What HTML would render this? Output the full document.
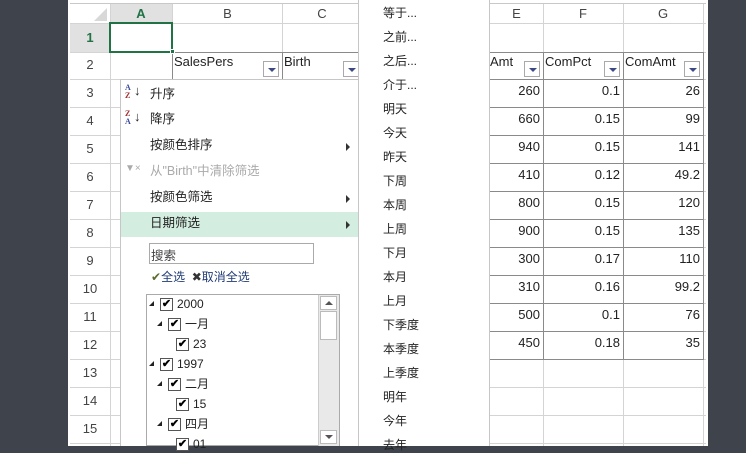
<!DOCTYPE html>
<html><head><meta charset="utf-8"><style>
*{margin:0;padding:0;box-sizing:border-box}
body{width:746px;height:446px;overflow:hidden;background:#3f434b;font-family:"Segoe UI","Liberation Sans","Noto Sans CJK SC",sans-serif;font-size:13px;color:#222;position:relative}
.a{position:absolute}
.sheet{left:68px;top:0;width:640px;height:446px;background:#fff}
.vl{position:absolute;width:1px;background:#d4d4d4}
.hl{position:absolute;height:1px;background:#d4d4d4}
.dv{position:absolute;width:1px;background:#8a8a8a}
.dh{position:absolute;height:1px;background:#8a8a8a}
.rh{position:absolute;left:70px;width:40px;text-align:center;color:#444;font-size:13px}
.ch{position:absolute;top:4px;height:19px;text-align:center;color:#444;font-size:13px;line-height:19px}
.num{position:absolute;text-align:right;font-size:13px;color:#222}
.dd{position:absolute;width:16px;height:16px;border:1px solid #aaa;background:#fff}
.dd:after{content:"";position:absolute;left:4px;top:6px;border-left:4px solid transparent;border-right:4px solid transparent;border-top:4px solid #3b4a84}
.mi{position:absolute;left:150px;font-size:12.5px;color:#222;line-height:16px}
.arr{position:absolute;left:346px;width:0;height:0;border-top:4px solid transparent;border-bottom:4px solid transparent;border-left:4px solid #333}
.si{position:absolute;left:383px;font-size:12px;color:#222;line-height:16px}
.cb{position:absolute;width:13px;height:13px;border:1px solid #555;background:#fff;font-size:11px;line-height:11px;text-align:center;font-weight:bold;color:#000}
.tri{position:absolute;width:0;height:0;border-left:5px solid transparent;border-bottom:5px solid #222}
.tt{position:absolute;font-size:12px;color:#222;line-height:15px}
</style></head><body>
<div class="a sheet"></div>
<div class="a" style="left:70px;top:3px;width:636px;height:1px;background:#c8c8c8"></div>
<div class="a" style="left:110px;top:4px;width:62px;height:19px;background:#e1e1e1"></div>
<div class="a" style="left:70px;top:23px;width:40px;height:29px;background:#e1e1e1"></div>
<div class="a" style="left:94px;top:8px;border-left:13px solid transparent;border-bottom:13px solid #d8d8d8"></div>
<div class="ch" style="left:110px;width:62px;color:#217346;font-weight:bold">A</div>
<div class="ch" style="left:173px;width:109px">B</div>
<div class="ch" style="left:282px;width:80px">C</div>
<div class="ch" style="left:490px;width:53px">E</div>
<div class="ch" style="left:543px;width:80px">F</div>
<div class="ch" style="left:623px;width:80px">G</div>
<div class="vl" style="left:110px;top:4px;height:442px"></div>
<div class="vl" style="left:172px;top:4px;height:442px"></div>
<div class="vl" style="left:282px;top:4px;height:442px"></div>
<div class="vl" style="left:543px;top:4px;height:442px"></div>
<div class="vl" style="left:623px;top:4px;height:442px"></div>
<div class="vl" style="left:703px;top:4px;height:442px"></div>
<div class="hl" style="left:70px;top:23px;width:636px"></div>
<div class="hl" style="left:70px;top:52px;width:636px"></div>
<div class="hl" style="left:70px;top:79px;width:636px"></div>
<div class="hl" style="left:70px;top:107px;width:636px"></div>
<div class="hl" style="left:70px;top:135px;width:636px"></div>
<div class="hl" style="left:70px;top:163px;width:636px"></div>
<div class="hl" style="left:70px;top:191px;width:636px"></div>
<div class="hl" style="left:70px;top:219px;width:636px"></div>
<div class="hl" style="left:70px;top:247px;width:636px"></div>
<div class="hl" style="left:70px;top:275px;width:636px"></div>
<div class="hl" style="left:70px;top:303px;width:636px"></div>
<div class="hl" style="left:70px;top:331px;width:636px"></div>
<div class="hl" style="left:70px;top:359px;width:636px"></div>
<div class="hl" style="left:70px;top:387px;width:636px"></div>
<div class="hl" style="left:70px;top:415px;width:636px"></div>
<div class="hl" style="left:70px;top:443px;width:636px"></div>
<div class="dh" style="left:172px;top:52px;width:532px"></div>
<div class="dh" style="left:172px;top:79px;width:532px"></div>
<div class="dh" style="left:490px;top:107px;width:214px"></div>
<div class="dh" style="left:490px;top:135px;width:214px"></div>
<div class="dh" style="left:490px;top:163px;width:214px"></div>
<div class="dh" style="left:490px;top:191px;width:214px"></div>
<div class="dh" style="left:490px;top:219px;width:214px"></div>
<div class="dh" style="left:490px;top:247px;width:214px"></div>
<div class="dh" style="left:490px;top:275px;width:214px"></div>
<div class="dh" style="left:490px;top:303px;width:214px"></div>
<div class="dh" style="left:490px;top:331px;width:214px"></div>
<div class="dh" style="left:490px;top:359px;width:214px"></div>
<div class="dv" style="left:172px;top:52px;height:27px"></div>
<div class="dv" style="left:282px;top:52px;height:27px"></div>
<div class="dv" style="left:543px;top:52px;height:307px"></div>
<div class="dv" style="left:623px;top:52px;height:307px"></div>
<div class="dv" style="left:703px;top:52px;height:307px"></div>
<div class="a" style="left:109px;top:22px;width:64px;height:31px;border:2px solid #217346"></div>
<div class="a" style="left:170px;top:49px;width:5px;height:5px;background:#217346;border:1px solid #fff"></div>
<div class="rh" style="top:30px;color:#217346;font-weight:bold">1</div>
<div class="rh" style="top:57px">2</div>
<div class="rh" style="top:85px">3</div>
<div class="rh" style="top:113px">4</div>
<div class="rh" style="top:141px">5</div>
<div class="rh" style="top:169px">6</div>
<div class="rh" style="top:197px">7</div>
<div class="rh" style="top:225px">8</div>
<div class="rh" style="top:253px">9</div>
<div class="rh" style="top:281px">10</div>
<div class="rh" style="top:309px">11</div>
<div class="rh" style="top:337px">12</div>
<div class="rh" style="top:365px">13</div>
<div class="rh" style="top:393px">14</div>
<div class="rh" style="top:421px">15</div>
<div class="a" style="left:174px;top:54px">SalesPers</div>
<div class="dd" style="left:263px;top:61px"></div>
<div class="a" style="left:284px;top:54px">Birth</div>
<div class="dd" style="left:343px;top:61px"></div>
<div class="a" style="left:490px;top:54px">Amt</div>
<div class="dd" style="left:524px;top:61px"></div>
<div class="a" style="left:545px;top:54px">ComPct</div>
<div class="dd" style="left:604px;top:61px"></div>
<div class="a" style="left:625px;top:54px">ComAmt</div>
<div class="dd" style="left:684px;top:61px"></div>
<div class="num" style="left:490px;width:50px;line-height:28px;top:77px">260<br>660<br>940<br>410<br>800<br>900<br>300<br>310<br>500<br>450</div>
<div class="num" style="left:543px;width:77px;line-height:28px;top:77px">0.1<br>0.15<br>0.15<br>0.12<br>0.15<br>0.15<br>0.17<br>0.16<br>0.1<br>0.18</div>
<div class="num" style="left:623px;width:77px;line-height:28px;top:77px">26<br>99<br>141<br>49.2<br>120<br>135<br>110<br>99.2<br>76<br>35</div>
<div class="a" style="left:120px;top:79px;width:239px;height:367px;background:#fff;border:1px solid #c6c6c6;border-bottom:none"></div>
<div class="a" style="left:121px;top:212px;width:237px;height:25px;background:#d3ede0"></div>
<div class="a" style="left:125px;top:84px;font:bold 8px 'Liberation Serif',serif;line-height:8px;color:#3b4a9a">A<br><span style="color:#a03030">Z</span></div>
<div class="a" style="left:134px;top:83px;font-size:13px">↓</div>
<div class="a" style="left:125px;top:110px;font:bold 8px 'Liberation Serif',serif;line-height:8px;color:#a03030">Z<br><span style="color:#3b4a9a">A</span></div>
<div class="a" style="left:134px;top:109px;font-size:13px">↓</div>
<div class="mi" style="top:86px">升序</div>
<div class="mi" style="top:111px">降序</div>
<div class="mi" style="top:137px">按颜色排序</div>
<div class="arr" style="top:143px"></div>
<div class="a" style="left:125px;top:163px;color:#aaa;font-size:10px">▼<span style="font-size:10px">×</span></div>
<div class="mi" style="top:163px;color:#aaa">从"Birth"中清除筛选</div>
<div class="mi" style="top:189px">按颜色筛选</div>
<div class="arr" style="top:195px"></div>
<div class="mi" style="top:215px">日期筛选</div>
<div class="arr" style="top:221px"></div>
<div class="a" style="left:149px;top:243px;width:165px;height:21px;border:1px solid #aaa;background:#fff;padding:1px 1px;font-size:12.5px;color:#444">搜索</div>
<div class="a" style="left:151px;top:268px;font-size:12px;color:#1f3a75"><span style="color:#5a6a30">✔</span>全选 &nbsp;<span style="color:#333">✖</span>取消全选</div>
<div class="a" style="left:146px;top:294px;width:194px;height:152px;border:1px solid #aaa;background:#fff"></div>
<div class="a" style="left:318px;top:295px;width:21px;height:151px;background:#e9e9e9;border-left:1px solid #ccc"></div>
<div class="a" style="left:320px;top:296px;width:17px;height:14px;border:1px solid #bbb;background:#fff"></div>
<div class="a" style="left:325px;top:301px;border-left:4px solid transparent;border-right:4px solid transparent;border-bottom:4px solid #555"></div>
<div class="a" style="left:320px;top:311px;width:17px;height:29px;border:1px solid #bbb;background:#fff"></div>
<div class="a" style="left:320px;top:430px;width:17px;height:14px;border:1px solid #bbb;background:#fff"></div>
<div class="a" style="left:325px;top:435px;border-left:4px solid transparent;border-right:4px solid transparent;border-top:4px solid #555"></div>
<div class="tri" style="left:149px;top:301px"></div><div class="cb" style="left:160px;top:298px">✔</div><div class="tt" style="left:177px;top:297px">2000</div>
<div class="tri" style="left:157px;top:321px"></div><div class="cb" style="left:168px;top:318px">✔</div><div class="tt" style="left:185px;top:317px">一月</div>
<div class="cb" style="left:176px;top:338px">✔</div><div class="tt" style="left:193px;top:337px">23</div>
<div class="tri" style="left:149px;top:361px"></div><div class="cb" style="left:160px;top:358px">✔</div><div class="tt" style="left:177px;top:357px">1997</div>
<div class="tri" style="left:157px;top:381px"></div><div class="cb" style="left:168px;top:378px">✔</div><div class="tt" style="left:185px;top:377px">二月</div>
<div class="cb" style="left:176px;top:398px">✔</div><div class="tt" style="left:193px;top:397px">15</div>
<div class="tri" style="left:157px;top:421px"></div><div class="cb" style="left:168px;top:418px">✔</div><div class="tt" style="left:185px;top:417px">四月</div>
<div class="cb" style="left:176px;top:438px">✔</div><div class="tt" style="left:193px;top:437px">01</div>
<div class="a" style="left:358px;top:0;width:132px;height:446px;background:#fff;border-left:1px solid #c6c6c6;border-right:1px solid #c6c6c6"></div>
<div class="si" style="top:5px">等于...</div>
<div class="si" style="top:29px">之前...</div>
<div class="si" style="top:53px">之后...</div>
<div class="si" style="top:77px">介于...</div>
<div class="si" style="top:101px">明天</div>
<div class="si" style="top:125px">今天</div>
<div class="si" style="top:149px">昨天</div>
<div class="si" style="top:173px">下周</div>
<div class="si" style="top:197px">本周</div>
<div class="si" style="top:221px">上周</div>
<div class="si" style="top:245px">下月</div>
<div class="si" style="top:269px">本月</div>
<div class="si" style="top:293px">上月</div>
<div class="si" style="top:317px">下季度</div>
<div class="si" style="top:341px">本季度</div>
<div class="si" style="top:365px">上季度</div>
<div class="si" style="top:389px">明年</div>
<div class="si" style="top:413px">今年</div>
<div class="si" style="top:437px">去年</div>
</body></html>
